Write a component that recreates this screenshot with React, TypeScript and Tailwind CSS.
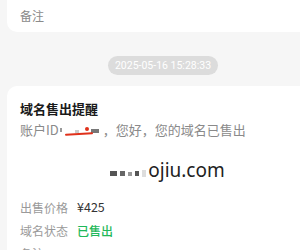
import React from "react";

const font = { fontFamily: '"Noto Sans CJK SC", "Noto Sans", sans-serif' };

const Row = ({ label, value, green }: { label: string; value: string; green?: boolean }) => (
  <div className="flex items-center h-[23px] text-[12px]">
    <span className="w-[57px] text-[#9a9a9a]">{label}</span>
    <span className={green ? "text-[#1fb85a] font-medium" : "text-[#333] text-[12.5px]"}>{value}</span>
  </div>
);

export default function App() {
  return (
    <div className="w-[300px] h-[250px] overflow-hidden bg-[#f6f6f6] pl-[7px]" style={font}>
      <div className="w-[310px] h-[32px] bg-white rounded-b-[10px] pl-[13px] flex items-center">
        <span className="text-[12px] text-[#8a8a8a]">备注</span>
      </div>

      <div className="flex justify-center mt-[24px] pl-[19px]">
        <span
          className="h-[19px] px-[7px] rounded-full bg-[#dcdcdc] text-white text-[10.5px] leading-[19px]"
          style={{ fontFamily: "Roboto, sans-serif" }}
        >
          2025-05-16 15:28:33
        </span>
      </div>

      <div className="w-[310px] mt-[11px] bg-white rounded-[10px] pl-[13px] pt-[14px] pb-[20px]">
        <div className="text-[13px] font-bold text-[#1a1a1a] leading-[18px]">域名售出提醒</div>
        <div className="flex items-center text-[13px] text-[#8a8a8a] mt-[3px] h-[18px]">
          <span>账户ID</span>
          <span className="relative inline-block w-[44px] h-[14px]">
            <span className="absolute left-[1px] top-[5px] w-[2px] h-[4px] bg-[#999]" />
            <span className="absolute left-[16px] top-[7px] w-[4px] h-[3px] bg-[#ccc]" />
            <span className="absolute left-[26px] top-[4px] w-[4px] h-[4px] rounded-full bg-[#e0311b]" />
            <span className="absolute left-[32px] top-[6px] w-[8px] h-[4px] bg-[#777]" />
            <span className="absolute left-[6px] top-[10px] w-[28px] h-[2px] rounded-full bg-[#e0311b] rotate-[-3deg]" />
          </span>
          <span>，您好，您的域名已售出</span>
        </div>

        <div className="flex justify-center items-end mt-[17px] pr-[2px] h-[26px]">
          <span className="inline-flex items-center gap-[3px] mr-[2px] mb-[5px]">
            <span className="w-[7px] h-[5px] bg-[#555]" />
            <span className="w-[5px] h-[5px] bg-[#666]" />
            <span className="w-[4px] h-[4px] bg-[#999]" />
            <span className="w-[4px] h-[5px] bg-[#555]" />
            <span className="w-[4px] h-[7px] bg-[#ddd]" />
          </span>
          <span className="text-[19px] text-[#222] leading-[24px]" style={{ fontFamily: '"Noto Sans", sans-serif' }}>
            ojiu.com
          </span>
        </div>

        <div className="mt-[14px]">
          <Row label="出售价格" value="¥425" />
          <Row label="域名状态" value="已售出" green />
          <Row label="备注" value="" />
        </div>
      </div>
    </div>
  );
}
